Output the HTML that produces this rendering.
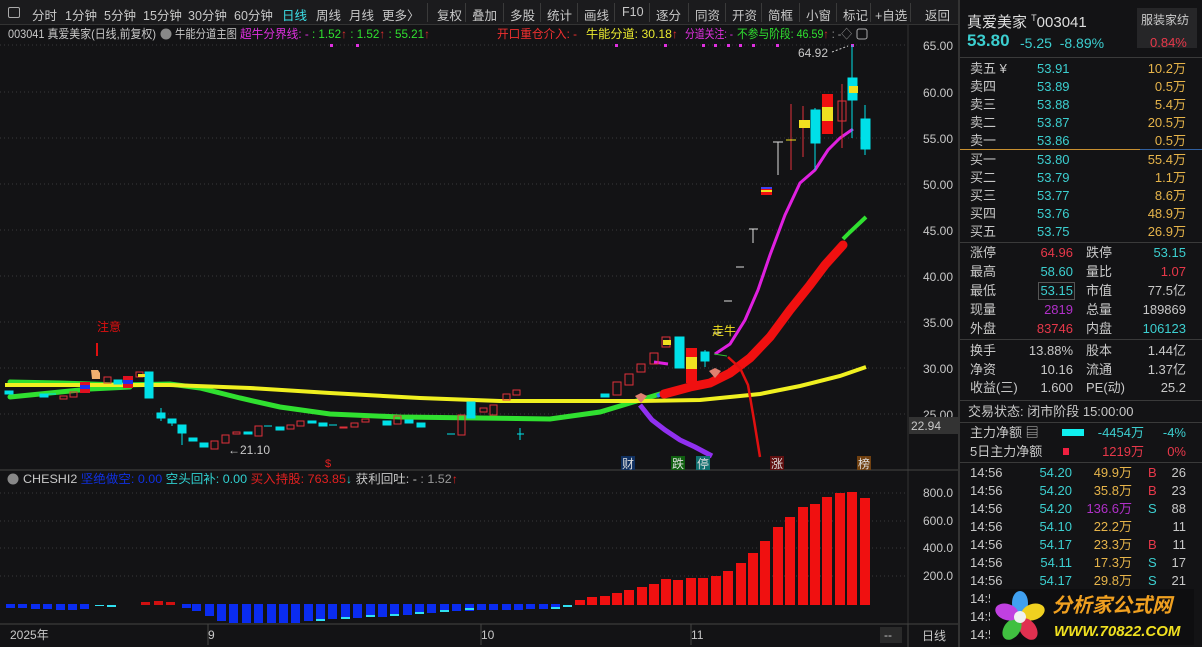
<!DOCTYPE html>
<html><head><meta charset="utf-8"><style>
*{margin:0;padding:0;box-sizing:border-box}
body{width:1202px;height:647px;background:#131315;overflow:hidden;position:relative;font-family:"Liberation Sans","Noto Sans CJK SC",sans-serif;color:#c8c8c8}
.tb{position:absolute;left:0;top:0;width:958px;height:25px;background:#1b1b1d;border-bottom:1px solid #333}
.tb span{position:absolute;top:5px;font-size:12.5px;color:#c8c8c8}
.tb i{position:absolute;top:3px;width:1px;height:19px;background:#3a3a3a}
.p{position:absolute;left:958px;top:0;width:244px;height:647px;border-left:2px solid #333;background:#131315}
.p div{position:absolute;font-size:13px;white-space:nowrap;line-height:16px}
.hl{position:absolute;left:0;width:244px;height:1px;background:#3a3a3a}
.c{color:#3ccfd0}.y{color:#e6b44a}.r{color:#e8384a}.g{color:#c8c8c8}.m{color:#b030c8}
</style></head><body>
<div class="tb">
<div style="position:absolute;left:8px;top:7px;width:12px;height:11px;border:1px solid #aaa;border-radius:2px"></div>
<span style="left:32px">分时</span><span style="left:65px">1分钟</span><span style="left:104px">5分钟</span><span style="left:143px">15分钟</span><span style="left:188px">30分钟</span><span style="left:234px">60分钟</span><span style="left:282px;color:#3ce0e8">日线</span><span style="left:316px">周线</span><span style="left:349px">月线</span><span style="left:382px">更多〉</span>
<i style="left:427px"></i><span style="left:437px">复权</span><i style="left:465px"></i><span style="left:472px">叠加</span><i style="left:503px"></i><span style="left:510px">多股</span><i style="left:540px"></i><span style="left:547px">统计</span><i style="left:577px"></i><span style="left:584px">画线</span><i style="left:614px"></i><span style="left:622px">F10</span><i style="left:649px"></i><span style="left:656px">逐分</span><i style="left:688px"></i><span style="left:695px">同资</span><i style="left:725px"></i><span style="left:732px">开资</span><i style="left:761px"></i><span style="left:768px">简框</span><i style="left:799px"></i><span style="left:806px">小窗</span><i style="left:836px"></i><span style="left:843px">标记</span><i style="left:870px"></i><span style="left:875px">+自选</span><i style="left:910px"></i><span style="left:925px">返回</span>
</div>
<svg width="958" height="647" style="position:absolute;left:0;top:0" font-family="Liberation Sans,Noto Sans CJK SC,sans-serif">
<g font-size="12">
<text x="8" y="38" fill="#c8c8c8" textLength="148" lengthAdjust="spacingAndGlyphs">003041 真爱美家(日线,前复权)</text>
<circle cx="166" cy="34" r="5.5" fill="#888"/>
<text x="175" y="38" fill="#c8c8c8" textLength="62" lengthAdjust="spacingAndGlyphs">牛能分道主图</text>
<text x="240" y="38" fill="#e030e0" textLength="190" lengthAdjust="spacingAndGlyphs">超牛分界线: - <tspan fill="#30e030">: 1.52</tspan><tspan fill="#e03030">↑</tspan><tspan fill="#30e030"> : 1.52</tspan><tspan fill="#e03030">↑</tspan><tspan fill="#30e030"> : 55.21</tspan><tspan fill="#e03030">↑</tspan></text>
<text x="497" y="38" fill="#f03030" textLength="80" lengthAdjust="spacingAndGlyphs">开口重仓介入: -</text>
<text x="586" y="38" fill="#e8e830" textLength="92" lengthAdjust="spacingAndGlyphs">牛能分道: 30.18<tspan fill="#e03030">↑</tspan></text>
<text x="685" y="38" fill="#e030e0" textLength="48" lengthAdjust="spacingAndGlyphs">分道关注: -</text>
<text x="737" y="38" fill="#30e030" textLength="115" lengthAdjust="spacingAndGlyphs">不参与阶段: 46.59<tspan fill="#e03030">↑</tspan><tspan fill="#999"> : -◇</tspan></text>
<rect x="857" y="29" width="10" height="10" rx="2" fill="none" stroke="#aaa"/>
</g>
<line x1="908" y1="25" x2="908" y2="624" stroke="#333"/>
<line x1="0" y1="470" x2="958" y2="470" stroke="#444"/>
<line x1="0" y1="624" x2="958" y2="624" stroke="#444"/>
<g stroke="#3a3a3a" stroke-dasharray="1 3">
<line x1="0" y1="45" x2="908" y2="45"/><line x1="0" y1="92" x2="908" y2="92"/><line x1="0" y1="138" x2="908" y2="138"/><line x1="0" y1="184" x2="908" y2="184"/><line x1="0" y1="230" x2="908" y2="230"/><line x1="0" y1="276" x2="908" y2="276"/><line x1="0" y1="322" x2="908" y2="322"/><line x1="0" y1="368" x2="908" y2="368"/><line x1="0" y1="414" x2="908" y2="414"/>
<line x1="0" y1="493" x2="908" y2="493"/><line x1="0" y1="521" x2="908" y2="521"/><line x1="0" y1="548" x2="908" y2="548"/><line x1="0" y1="576" x2="908" y2="576"/>
</g>
<g font-size="12" fill="#c8c8c8">
<text x="923" y="50">65.00</text><text x="923" y="97">60.00</text><text x="923" y="143">55.00</text><text x="923" y="189">50.00</text><text x="923" y="235">45.00</text><text x="923" y="281">40.00</text><text x="923" y="327">35.00</text><text x="923" y="373">30.00</text><text x="923" y="419">25.00</text>
<rect x="909" y="417" width="49" height="17" fill="#333"/><text x="911" y="430">22.94</text>
<text x="923" y="497">800.0</text><text x="923" y="525">600.0</text><text x="923" y="552">400.0</text><text x="923" y="580">200.0</text>
<text x="10" y="639">2025年</text><text x="208" y="639">9</text><text x="481" y="639">10</text><text x="691" y="639">11</text>
<rect x="880" y="627" width="22" height="16" fill="#2a2a2a"/><text x="884" y="639">--</text>
<text x="922" y="640">日线</text>
</g>
<line x1="208" y1="624" x2="208" y2="645" stroke="#444"/><line x1="481" y1="624" x2="481" y2="645" stroke="#444"/><line x1="691" y1="624" x2="691" y2="645" stroke="#444"/><line x1="908" y1="624" x2="908" y2="647" stroke="#444"/>
<g fill="#e030e0"><rect x="615" y="44" width="3" height="3"/><rect x="664" y="44" width="3" height="3"/><rect x="702" y="44" width="3" height="3"/><rect x="714" y="44" width="3" height="3"/><rect x="727" y="44" width="3" height="3"/><rect x="739" y="44" width="3" height="3"/><rect x="752" y="44" width="3" height="3"/><rect x="776" y="44" width="3" height="3"/><rect x="851" y="44" width="3" height="3"/><rect x="330" y="44" width="3" height="3"/><rect x="356" y="44" width="3" height="3"/></g>
<polyline points="10,397 50,393 90,389 130,387" fill="none" stroke="#30e030" stroke-width="5" stroke-linecap="round"/>
<polyline points="10,382 60,383 120,385 170,384 200,388 240,398 280,407 330,414 400,417 480,418 550,419 600,412 640,400 660,394" fill="none" stroke="#30e030" stroke-width="5" stroke-linecap="round"/>
<polyline points="5,385 60,385 170,385 250,388 330,393 420,398 500,401 640,401 700,400 760,394 800,386 840,376 866,367" fill="none" stroke="#f0f020" stroke-width="4"/>
<polyline points="843,239 850,232 866,217" fill="none" stroke="#30e030" stroke-width="4"/>
<polyline points="657,396 665,392" stroke="#2080ff" stroke-width="4"/>
<polyline points="664,394 690,387 710,383 730,373 750,358 770,337 790,310 810,285 825,265 843,245" fill="none" stroke="#f01010" stroke-width="9" stroke-linecap="round"/>
<polyline points="715,354 730,344 745,320 758,290 770,255 785,215 800,183 815,170 828,150 840,138 853,129" fill="none" stroke="#e020e0" stroke-width="3"/>
<polyline points="654,362 668,364" stroke="#e020e0" stroke-width="3"/>
<polyline points="640,405 652,420 665,430 680,440 695,447 712,456" fill="none" stroke="#9030f0" stroke-width="5"/>
<polyline points="728,357 740,368 748,385 754,420 760,457" fill="none" stroke="#e01010" stroke-width="2.5"/>
<polyline points="714,354 727,356" stroke="#30c030" stroke-width="1"/>
<path d="M635,396 l6,-3 l6,3 l-6,7z" fill="#e08070"/><path d="M709,371 l6,-3 l6,3 l-6,7z" fill="#e08070"/>
<g fill="#00e0e8" stroke="#00e0e8">
<rect x="5" y="391" width="8" height="3"/><rect x="40" y="394" width="8" height="3"/><rect x="114" y="380" width="8" height="4"/><rect x="145" y="372" width="8" height="26"/>
<rect x="157" y="413" width="8" height="5"/><line x1="161" y1="408" x2="161" y2="421"/>
<rect x="168" y="419" width="8" height="4"/><line x1="172" y1="419" x2="172" y2="426"/>
<rect x="178" y="425" width="8" height="8"/><line x1="182" y1="425" x2="182" y2="445"/>
<rect x="189" y="438" width="8" height="3"/><rect x="200" y="443" width="8" height="4"/>
<rect x="244" y="432" width="8" height="2"/><rect x="276" y="427" width="8" height="3"/><rect x="308" y="421" width="8" height="2"/><rect x="319" y="423" width="8" height="3"/><rect x="383" y="421" width="8" height="4"/><rect x="405" y="420" width="8" height="3"/><rect x="417" y="423" width="8" height="4"/><rect x="467" y="402" width="8" height="16"/>
<rect x="601" y="394" width="8" height="3"/><rect x="675" y="337" width="9" height="31"/><rect x="701" y="352" width="8" height="9"/><line x1="705" y1="350" x2="705" y2="367"/>
<rect x="811" y="110" width="9" height="33"/><line x1="815" y1="108" x2="815" y2="170"/>
<rect x="848" y="78" width="9" height="22"/><line x1="852" y1="45" x2="852" y2="138"/>
<rect x="861" y="119" width="9" height="30"/><line x1="865" y1="105" x2="865" y2="155"/>
</g>
<g stroke="#00e0e8"><line x1="40" y1="394" x2="56" y2="394"/><line x1="264" y1="426" x2="272" y2="426"/><line x1="329" y1="425" x2="337" y2="425"/><line x1="447" y1="434" x2="455" y2="434"/><line x1="517" y1="434" x2="524" y2="434"/><line x1="520" y1="428" x2="520" y2="440"/></g>
<g fill="none" stroke="#e0303a">
<rect x="60" y="396" width="7" height="3"/><rect x="70" y="392" width="7" height="5"/><rect x="104" y="377" width="7" height="6"/><rect x="136" y="372" width="7" height="5"/>
<rect x="211" y="441" width="7" height="8"/><rect x="222" y="435" width="7" height="8"/><rect x="233" y="432" width="7" height="2"/><rect x="255" y="426" width="7" height="10"/><rect x="287" y="425" width="7" height="4"/><rect x="297" y="421" width="7" height="5"/><rect x="340" y="427" width="7" height="1"/><rect x="351" y="423" width="7" height="4"/><rect x="362" y="419" width="7" height="3"/><rect x="394" y="416" width="7" height="8"/><rect x="458" y="415" width="7" height="20"/>
<rect x="480" y="408" width="7" height="4"/><rect x="490" y="405" width="7" height="10"/><rect x="503" y="394" width="7" height="6"/><rect x="513" y="390" width="7" height="5"/>
<rect x="613" y="382" width="8" height="13"/><rect x="625" y="374" width="8" height="11"/><rect x="637" y="364" width="8" height="8"/><rect x="650" y="353" width="8" height="11"/><rect x="662" y="337" width="8" height="10"/>
<rect x="838" y="101" width="8" height="20"/><line x1="842" y1="84" x2="842" y2="148"/>
<line x1="791" y1="104" x2="791" y2="170"/><line x1="803" y1="106" x2="803" y2="157"/>
</g>
<rect x="663" y="340" width="8" height="5" fill="#f0e020"/>
<rect x="686" y="348" width="11" height="35" fill="#f01010"/><rect x="686" y="357" width="11" height="12" fill="#f0e020"/>
<rect x="822" y="94" width="11" height="40" fill="#f01010"/><rect x="822" y="107" width="11" height="14" fill="#f0e020"/>
<rect x="799" y="120" width="11" height="8" fill="#f0e020"/><rect x="849" y="86" width="9" height="7" fill="#f0e020"/>
<rect x="761" y="188" width="11" height="7" fill="#f01010"/><rect x="761" y="190" width="11" height="2" fill="#f0e020"/><rect x="761" y="187" width="11" height="2" fill="#4040f0"/>
<g stroke="#ddd"><line x1="713" y1="333" x2="721" y2="333"/><line x1="724" y1="301" x2="732" y2="301"/><line x1="736" y1="267" x2="744" y2="267"/><line x1="749" y1="229" x2="758" y2="229"/><line x1="753" y1="229" x2="753" y2="243"/><line x1="773" y1="142" x2="783" y2="142"/><line x1="778" y1="142" x2="778" y2="175"/><line x1="786" y1="140" x2="796" y2="140" stroke="#f0e020"/></g>
<rect x="80" y="382" width="10" height="11" fill="#e01020"/><rect x="80" y="385" width="10" height="4" fill="#2030f0"/>
<rect x="123" y="376" width="10" height="12" fill="#e01020"/><rect x="123" y="380" width="10" height="4" fill="#2030f0"/>
<rect x="138" y="374" width="7" height="3" fill="#f0e020"/>
<path d="M91,370 h7 l2,3 v6 h-8z" fill="#f0b070"/>
<rect x="96" y="343" width="2" height="13" fill="#e01010"/>
<text x="97" y="331" font-size="12" fill="#e01010">注意</text>
<text x="712" y="335" font-size="12" fill="#f0e020">走牛</text>
<text x="228" y="454" font-size="12" fill="#c8c8c8">←21.10</text>
<text x="798" y="57" font-size="12" fill="#c8c8c8">64.92</text><path d="M832,52 l16,-6" stroke="#ccc" stroke-dasharray="2 2"/>
<text x="325" y="467" font-size="11" fill="#e02020">$</text>
<g font-size="12"><rect x="621" y="456" width="14" height="14" fill="#103060"/><text x="622" y="468" fill="#ddd">财</text>
<rect x="671" y="456" width="14" height="14" fill="#106010"/><text x="672" y="468" fill="#ddd">跌</text>
<rect x="696" y="456" width="14" height="14" fill="#107070"/><text x="697" y="468" fill="#ddd">停</text>
<rect x="770" y="456" width="14" height="14" fill="#601010"/><text x="771" y="468" fill="#ddd">涨</text>
<rect x="857" y="456" width="14" height="14" fill="#704010"/><text x="858" y="468" fill="#ddd">榜</text></g>
<circle cx="13" cy="479" r="5.5" fill="#888"/>
<text x="23" y="483" font-size="12" fill="#c8c8c8" textLength="435" lengthAdjust="spacingAndGlyphs">CHESHI2 <tspan fill="#1030e0">坚绝做空: 0.00</tspan> <tspan fill="#30d0d0">空头回补: 0.00</tspan> <tspan fill="#e02020">买入持股: 763.85</tspan><tspan fill="#30d0d0">↓</tspan> 获利回吐: - <tspan fill="#999">: 1.52</tspan><tspan fill="#e02020">↑</tspan></text>
<g fill="#0a2cf0">
<rect x="6" y="604" width="9" height="4"/><rect x="18" y="604" width="9" height="4"/><rect x="31" y="604" width="9" height="5"/><rect x="43" y="604" width="9" height="5"/><rect x="56" y="604" width="9" height="6"/><rect x="68" y="604" width="9" height="6"/><rect x="80" y="604" width="9" height="5"/><rect x="182" y="604" width="9" height="4"/>
<rect x="192" y="604" width="9" height="7"/><rect x="205" y="604" width="9" height="12"/><rect x="217" y="604" width="9" height="17"/><rect x="229" y="604" width="9" height="19"/><rect x="242" y="604" width="9" height="19"/><rect x="254" y="604" width="9" height="19"/><rect x="267" y="604" width="9" height="19"/><rect x="279" y="604" width="9" height="19"/><rect x="291" y="604" width="9" height="19"/><rect x="304" y="604" width="9" height="17"/><rect x="316" y="604" width="9" height="17"/><rect x="328" y="604" width="9" height="15"/><rect x="341" y="604" width="9" height="15"/><rect x="353" y="604" width="9" height="14"/><rect x="366" y="604" width="9" height="13"/><rect x="378" y="604" width="9" height="13"/><rect x="390" y="604" width="9" height="12"/><rect x="403" y="604" width="9" height="11"/><rect x="415" y="604" width="9" height="10"/><rect x="427" y="604" width="9" height="9"/><rect x="440" y="604" width="9" height="8"/><rect x="452" y="604" width="9" height="7"/><rect x="465" y="604" width="9" height="7"/><rect x="477" y="604" width="9" height="6"/><rect x="489" y="604" width="9" height="6"/><rect x="502" y="604" width="9" height="6"/><rect x="514" y="604" width="9" height="6"/><rect x="526" y="604" width="9" height="5"/><rect x="539" y="604" width="9" height="5"/><rect x="551" y="604" width="9" height="4"/>
</g>
<g fill="#30e0f0"><rect x="95" y="605" width="9" height="1"/><rect x="107" y="605" width="9" height="2"/><rect x="316" y="619" width="9" height="2"/><rect x="341" y="617" width="9" height="2"/><rect x="366" y="615" width="9" height="2"/><rect x="390" y="614" width="9" height="2"/><rect x="415" y="612" width="9" height="2"/><rect x="440" y="610" width="9" height="2"/><rect x="465" y="608" width="9" height="2"/><rect x="551" y="607" width="9" height="2"/><rect x="563" y="605" width="9" height="2"/></g>
<g fill="#d01010"><rect x="141" y="602" width="9" height="3"/><rect x="154" y="601" width="9" height="4"/><rect x="166" y="602" width="9" height="3"/></g>
<g fill="#f01010">
<rect x="575" y="600" width="10" height="5"/><rect x="587" y="597" width="10" height="8"/><rect x="600" y="596" width="10" height="9"/><rect x="612" y="593" width="10" height="12"/><rect x="624" y="590" width="10" height="15"/><rect x="637" y="587" width="10" height="18"/><rect x="649" y="584" width="10" height="21"/><rect x="661" y="579" width="10" height="26"/><rect x="673" y="580" width="10" height="25"/><rect x="686" y="578" width="10" height="27"/><rect x="698" y="578" width="10" height="27"/><rect x="711" y="576" width="10" height="29"/><rect x="723" y="571" width="10" height="34"/><rect x="736" y="563" width="10" height="42"/><rect x="748" y="553" width="10" height="52"/><rect x="760" y="541" width="10" height="64"/><rect x="773" y="527" width="10" height="78"/><rect x="785" y="517" width="10" height="88"/><rect x="798" y="507" width="10" height="98"/><rect x="810" y="504" width="10" height="101"/><rect x="822" y="497" width="10" height="108"/><rect x="835" y="493" width="10" height="112"/><rect x="847" y="492" width="10" height="113"/><rect x="860" y="498" width="10" height="107"/>
</g>
</svg>
<div class="p">
<div style="left:7px;top:10px;font-size:15px;color:#ddd">真爱美家 <sup style="font-size:9px">T</sup>003041</div>
<div style="left:177px;top:8px;width:60px;height:40px;background:#262628"></div>
<div style="left:181px;top:12px;font-size:12px;color:#ccc">服装家纺</div>
<div style="left:7px;top:33px;font-size:17px;font-weight:bold" class="c">53.80</div>
<div style="left:60px;top:35px;font-size:14px" class="c">-5.25 &nbsp;-8.89%</div>
<div style="left:190px;top:35px;font-size:13px" class="r">0.84%</div>
<div class="hl" style="top:57px"></div>
<div style="left:10px;top:61px">卖五 ¥</div><div style="left:77px;top:61px" class="c">53.91</div><div style="right:16px;top:61px" class="y">10.2万</div>
<div style="left:10px;top:79px">卖四</div><div style="left:77px;top:79px" class="c">53.89</div><div style="right:16px;top:79px" class="y">0.5万</div>
<div style="left:10px;top:97px">卖三</div><div style="left:77px;top:97px" class="c">53.88</div><div style="right:16px;top:97px" class="y">5.4万</div>
<div style="left:10px;top:115px">卖二</div><div style="left:77px;top:115px" class="c">53.87</div><div style="right:16px;top:115px" class="y">20.5万</div>
<div style="left:10px;top:133px">卖一</div><div style="left:77px;top:133px" class="c">53.86</div><div style="right:16px;top:133px" class="y">0.5万</div>
<div class="hl" style="top:149px;background:#c89030;width:180px"></div><div class="hl" style="top:149px;left:180px;width:62px;background:#3060a0"></div>
<div style="left:10px;top:152px">买一</div><div style="left:77px;top:152px" class="c">53.80</div><div style="right:16px;top:152px" class="y">55.4万</div>
<div style="left:10px;top:170px">买二</div><div style="left:77px;top:170px" class="c">53.79</div><div style="right:16px;top:170px" class="y">1.1万</div>
<div style="left:10px;top:188px">买三</div><div style="left:77px;top:188px" class="c">53.77</div><div style="right:16px;top:188px" class="y">8.6万</div>
<div style="left:10px;top:206px">买四</div><div style="left:77px;top:206px" class="c">53.76</div><div style="right:16px;top:206px" class="y">48.9万</div>
<div style="left:10px;top:224px">买五</div><div style="left:77px;top:224px" class="c">53.75</div><div style="right:16px;top:224px" class="y">26.9万</div>
<div class="hl" style="top:242px"></div>
<div style="left:10px;top:245px">涨停</div><div style="right:129px;top:245px" class="r">64.96</div><div style="left:126px;top:245px">跌停</div><div style="right:16px;top:245px" class="c">53.15</div>
<div style="left:10px;top:264px">最高</div><div style="right:129px;top:264px" class="c">58.60</div><div style="left:126px;top:264px">量比</div><div style="right:16px;top:264px" class="r">1.07</div>
<div style="left:10px;top:283px">最低</div><div style="right:127px;top:282px;border:1px solid #555;padding:0 1px" class="c">53.15</div><div style="left:126px;top:283px">市值</div><div style="right:16px;top:283px">77.5亿</div>
<div style="left:10px;top:302px">现量</div><div style="right:129px;top:302px" class="m">2819</div><div style="left:126px;top:302px">总量</div><div style="right:16px;top:302px">189869</div>
<div style="left:10px;top:321px">外盘</div><div style="right:129px;top:321px" class="r">83746</div><div style="left:126px;top:321px">内盘</div><div style="right:16px;top:321px" class="c">106123</div>
<div class="hl" style="top:339px"></div>
<div style="left:10px;top:343px">换手</div><div style="right:129px;top:343px">13.88%</div><div style="left:126px;top:343px">股本</div><div style="right:16px;top:343px">1.44亿</div>
<div style="left:10px;top:362px">净资</div><div style="right:129px;top:362px">10.16</div><div style="left:126px;top:362px">流通</div><div style="right:16px;top:362px">1.37亿</div>
<div style="left:10px;top:380px">收益(三)</div><div style="right:129px;top:380px">1.600</div><div style="left:126px;top:380px">PE(动)</div><div style="right:16px;top:380px">25.2</div>
<div class="hl" style="top:400px"></div>
<div style="left:8px;top:404px">交易状态: 闭市阶段 15:00:00</div>
<div class="hl" style="top:422px"></div>
<div style="left:10px;top:425px">主力净额 ▤</div><div style="left:102px;top:429px;width:22px;height:7px;background:#10f0f0"></div><div style="right:58px;top:425px" class="c">-4454万</div><div style="right:16px;top:425px" class="c">-4%</div>
<div style="left:10px;top:444px">5日主力净额</div><div style="left:103px;top:448px;width:6px;height:7px;background:#f02040"></div><div style="right:58px;top:444px" class="r">1219万</div><div style="right:16px;top:444px" class="r">0%</div>
<div class="hl" style="top:462px"></div>
<div style="left:10px;top:465px">14:56</div><div style="right:130px;top:465px" class="c">54.20</div><div style="right:70px;top:465px" class="y">49.9万</div><div style="left:188px;top:465px" class="r">B</div><div style="right:16px;top:465px">26</div>
<div style="left:10px;top:483px">14:56</div><div style="right:130px;top:483px" class="c">54.20</div><div style="right:70px;top:483px" class="y">35.8万</div><div style="left:188px;top:483px" class="r">B</div><div style="right:16px;top:483px">23</div>
<div style="left:10px;top:501px">14:56</div><div style="right:130px;top:501px" class="c">54.20</div><div style="right:70px;top:501px" class="m">136.6万</div><div style="left:188px;top:501px" class="c">S</div><div style="right:16px;top:501px">88</div>
<div style="left:10px;top:519px">14:56</div><div style="right:130px;top:519px" class="c">54.10</div><div style="right:70px;top:519px" class="y">22.2万</div><div style="right:16px;top:519px">11</div>
<div style="left:10px;top:537px">14:56</div><div style="right:130px;top:537px" class="c">54.17</div><div style="right:70px;top:537px" class="y">23.3万</div><div style="left:188px;top:537px" class="r">B</div><div style="right:16px;top:537px">11</div>
<div style="left:10px;top:555px">14:56</div><div style="right:130px;top:555px" class="c">54.11</div><div style="right:70px;top:555px" class="y">17.3万</div><div style="left:188px;top:555px" class="c">S</div><div style="right:16px;top:555px">17</div>
<div style="left:10px;top:573px">14:56</div><div style="right:130px;top:573px" class="c">54.17</div><div style="right:70px;top:573px" class="y">29.8万</div><div style="left:188px;top:573px" class="c">S</div><div style="right:16px;top:573px">21</div>
<div style="left:10px;top:591px">14:5</div><div style="left:10px;top:609px">14:5</div><div style="left:10px;top:627px">14:5</div>
<div style="left:30px;top:589px;width:204px;height:56px;background:#0e0e10"></div>
<svg style="position:absolute;left:34px;top:590px" width="54" height="54"><g transform="translate(26,27)"><ellipse cx="0" cy="-14" rx="8" ry="12" fill="#40a0f0"/><ellipse cx="13" cy="-5" rx="8" ry="12" transform="rotate(72 13 -5)" fill="#f0d020"/><ellipse cx="8" cy="12" rx="8" ry="12" transform="rotate(144 8 12)" fill="#e03050"/><ellipse cx="-8" cy="12" rx="8" ry="12" transform="rotate(216 -8 12)" fill="#40c040"/><ellipse cx="-13" cy="-5" rx="8" ry="12" transform="rotate(288 -13 -5)" fill="#c040e0"/><circle r="6" fill="#f0f0f0"/></g></svg>
<div style="left:92px;top:594px;font-size:20px;font-weight:bold;color:#f0a020;font-style:italic;line-height:24px">分析家公式网</div>
<div style="left:94px;top:624px;font-size:15px;font-weight:bold;color:#f0e020;font-style:italic">WWW.70822.COM</div>
</div>
</body></html>
